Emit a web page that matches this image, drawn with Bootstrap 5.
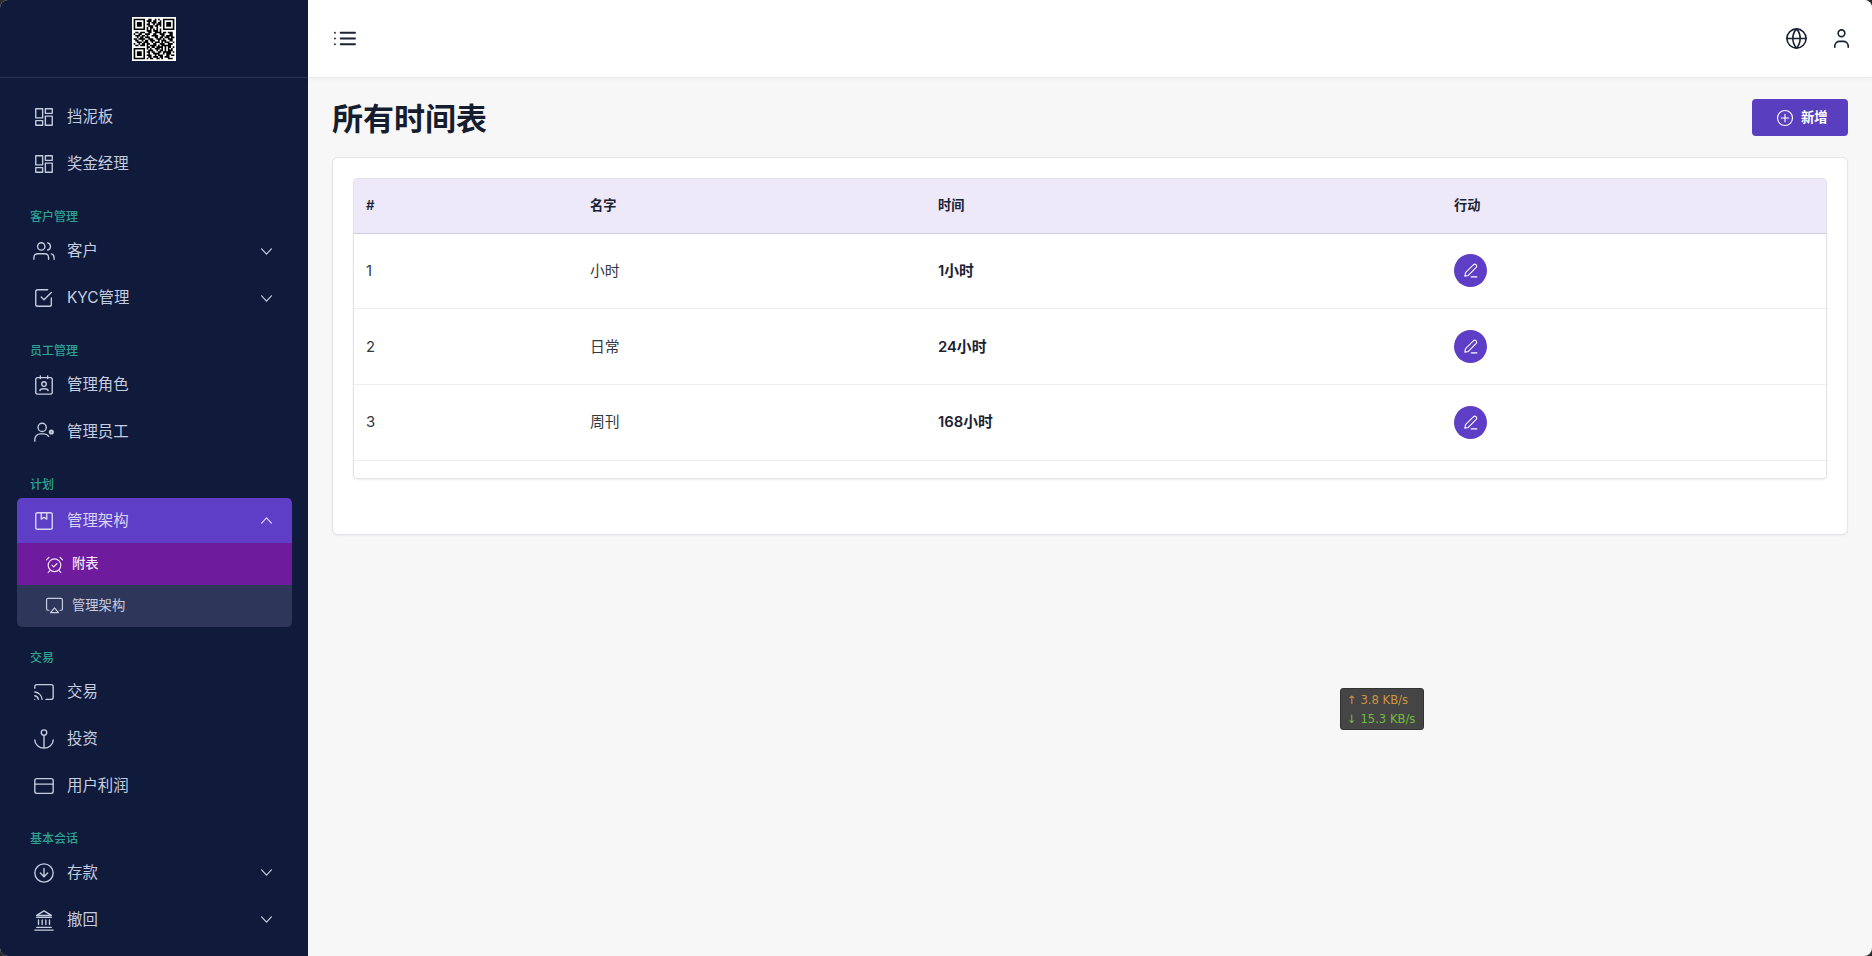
<!DOCTYPE html>
<html lang="zh"><head><meta charset="utf-8"><title>所有时间表</title>
<link href="https://cdn.jsdelivr.net/npm/bootstrap@5.3.0/dist/css/bootstrap.min.css" rel="stylesheet">
<style>
html,body{height:100%;background:#2b2b2b;overflow:hidden}
body{font-family:Inter,"Noto Sans CJK SC",sans-serif;color:#1a2233}
.shell{height:956px;border-radius:8px;overflow:hidden;background:#f7f7f8;position:relative}
.ic{fill:none;stroke:currentColor;stroke-width:1.5;stroke-linecap:round;stroke-linejoin:round;flex:none}
.side{width:308px;flex:none;background:#101a3a;color:#c6cde0;height:956px;overflow:hidden}
.brand{height:77.5px;border-bottom:1px solid #2a3350}
.qr{width:44px;height:44px;margin-top:2px;background:#fff}
.menu{padding:16px 16px 0 17px}
.entry{height:47px;padding:0 19px 0 16px;gap:12px;color:#c6cde0;font-size:15.4px;text-decoration:none}
.entry svg.m{width:22px;height:22px}
.entry svg.v{width:13px;height:13px;margin-left:auto;stroke-width:2.2}
.sect{font-size:12px;line-height:18px;padding:20.5px 0 1.5px 13px;color:#2da392;font-weight:500;height:40px}
.entry.on{height:45px;margin-top:2.5px;background:#5e3ec6;border-radius:5px 5px 0 0;color:#d9d5f2}
.sub{height:41.5px;padding-left:28px;gap:8px;font-size:13.3px;background:#2e3659;color:#c6cde0}
.sub svg{width:19px;height:19px}
.sub.cur{background:#6f1b9e;color:#f0e4f8;height:42px;font-weight:500}
.sub.end{border-radius:0 0 5px 5px;margin-bottom:1.5px}
.top{height:78px;background:#fff;border-bottom:1px solid #e9e9ec;padding:0 19px 0 25px;box-shadow:0 1px 5px rgba(20,20,50,.04)}
.top svg{width:23px;height:23px;color:#1a2233;stroke-width:1.7}
.top svg.lst{stroke-width:1.9}
.sp22{gap:22px}
.pad{padding:21px 24px 0 24px}
.ttl{font-size:31px;font-weight:700;color:#151d2f;line-height:37px;height:37px;padding-top:1px;margin:0}
.addbtn{width:96px;height:37px;background:#5a3ec0;color:#fff;font-size:13.3px;font-weight:700;border:0;border-radius:4px;gap:7px;padding:0 0 0 24px}
.addbtn svg{width:18px;height:18px}
.panel{margin-top:21px;background:#fff;border:1px solid #e3e3e8;border-radius:6px;height:378px;padding:20px;box-shadow:0 1px 2px rgba(20,20,50,.05)}
.tbox{border:1px solid #e3e3e8;border-radius:4px;height:301px;overflow:hidden;box-shadow:0 1px 2px rgba(20,20,50,.08)}
.tbl{table-layout:fixed;width:100%;margin:0}
.tbl th{background:#ede9f8;height:54px;padding:0 12px;font-size:13.2px;font-weight:600;color:#1a2233;vertical-align:middle;border-bottom:1px solid #cfcbe3}
.tbl td{height:75.8px;padding:0 12px;font-size:14.8px;color:#33373f;vertical-align:middle;border-bottom:1px solid #eeeef1}
.tbl td.hrs{font-weight:600;color:#1a2233}
.w1{width:224px}.w2{width:348px}.w3{width:516px}
.edit{width:33px;height:33px;background:#5e3ec6;color:#fff;padding:0;border:0}
.edit svg{width:17px;height:17px}
.speed{position:absolute;left:1340px;top:688px;width:84px;height:42px;background:#454545;border:1px solid #333;border-radius:3px;font-family:"DejaVu Sans",sans-serif;font-size:11.6px;line-height:19px;padding:2px 0 0 6px;white-space:nowrap}
.up{color:#cf9440}.dn{color:#6fbe3e}
</style></head><body>
<div class="shell d-flex">
<aside class="side d-flex flex-column">
<div class="brand d-flex justify-content-center align-items-center">
<svg class="qr" viewBox="-1 -1 27 27"><path fill="none" stroke="#000" stroke-width="1" d="M0 .5h7M9 .5h2M13 .5h1M15 .5h1M18 .5h7M0 1.5h1M6 1.5h1M8 1.5h3M12 1.5h2M16 1.5h1M18 1.5h1M24 1.5h1M0 2.5h1M2 2.5h3M6 2.5h1M9 2.5h1M11 2.5h3M15 2.5h2M18 2.5h1M20 2.5h3M24 2.5h1M0 3.5h1M2 3.5h3M6 3.5h1M8 3.5h2M12 3.5h1M14 3.5h3M18 3.5h1M20 3.5h3M24 3.5h1M0 4.5h1M2 4.5h3M6 4.5h1M9 4.5h3M13 4.5h2M16 4.5h1M18 4.5h1M20 4.5h3M24 4.5h1M0 5.5h1M6 5.5h1M8 5.5h1M10 5.5h2M14 5.5h1M18 5.5h1M24 5.5h1M0 6.5h7M8 6.5h1M10 6.5h1M12 6.5h1M14 6.5h1M16 6.5h1M18 6.5h7M8 7.5h3M12 7.5h3M16 7.5h1M1 8.5h2M4 8.5h3M9 8.5h2M13 8.5h4M18 8.5h2M21 8.5h3M0 9.5h1M3 9.5h2M7 9.5h3M12 9.5h2M16 9.5h3M22 9.5h2M1 10.5h3M5 10.5h2M8 10.5h1M11 10.5h4M17 10.5h2M20 10.5h4M2 11.5h1M4 11.5h2M7 11.5h3M13 11.5h2M16 11.5h2M19 11.5h3M23 11.5h2M0 12.5h2M3 12.5h4M9 12.5h3M14 12.5h3M18 12.5h1M21 12.5h3M1 13.5h2M5 13.5h1M7 13.5h2M10 13.5h3M15 13.5h1M17 13.5h3M22 13.5h2M2 14.5h3M6 14.5h3M11 14.5h1M13 14.5h3M17 14.5h1M19 14.5h3M24 14.5h1M0 15.5h1M3 15.5h1M5 15.5h2M8 15.5h2M12 15.5h2M16 15.5h3M21 15.5h3M1 16.5h2M4 16.5h3M8 16.5h1M10 16.5h4M15 16.5h1M17 16.5h6M8 17.5h2M11 17.5h2M14 17.5h3M17 17.5h1M19 17.5h1M21 17.5h2M24 17.5h1M0 18.5h7M8 18.5h1M10 18.5h1M13 18.5h3M17 18.5h1M19 18.5h1M21 18.5h1M23 18.5h1M0 19.5h1M6 19.5h1M9 19.5h3M14 19.5h1M16 19.5h2M19 19.5h1M21 19.5h3M0 20.5h1M2 20.5h3M6 20.5h1M8 20.5h2M11 20.5h2M15 20.5h2M18 20.5h5M24 20.5h1M0 21.5h1M2 21.5h3M6 21.5h1M9 21.5h1M12 21.5h4M18 21.5h1M20 21.5h3M0 22.5h1M2 22.5h3M6 22.5h1M8 22.5h3M13 22.5h1M15 22.5h3M20 22.5h2M23 22.5h2M0 23.5h1M6 23.5h1M9 23.5h2M12 23.5h3M16 23.5h2M19 23.5h3M0 24.5h7M8 24.5h1M10 24.5h2M14 24.5h2M17 24.5h1M21 24.5h3"/></svg>
</div>
<nav class="menu d-flex flex-column">
<a class="entry d-flex align-items-center"><svg class="ic m" viewBox="0 0 24 24"><rect x="3" y="3" width="7.500" height="10"/><rect x="13.500" y="3" width="7.500" height="5"/><rect x="3" y="16" width="7.500" height="5"/><rect x="13.500" y="11" width="7.500" height="10"/></svg>挡泥板</a>
<a class="entry d-flex align-items-center"><svg class="ic m" viewBox="0 0 24 24"><rect x="3" y="3" width="7.500" height="10"/><rect x="13.500" y="3" width="7.500" height="5"/><rect x="3" y="16" width="7.500" height="5"/><rect x="13.500" y="11" width="7.500" height="10"/></svg>奖金经理</a>
<div class="sect">客户管理</div>
<a class="entry d-flex align-items-center"><svg class="ic m" viewBox="0 0 24 24"><path d="M17 21v-2a4 4 0 0 0-4-4H5a4 4 0 0 0-4 4v2"/><circle cx="9" cy="7" r="4"/><path d="M23 21v-2a4 4 0 0 0-3-3.870M16 3.130a4 4 0 0 1 0 7.750"/></svg>客户<svg class="ic v" viewBox="0 0 24 24"><path d="M3 7l9 10 9-10"/></svg></a>
<a class="entry d-flex align-items-center"><svg class="ic m" viewBox="0 0 24 24"><path d="M9 11l3 3 8-8"/><path d="M20 12v7a2 2 0 0 1-2 2H5a2 2 0 0 1-2-2V5a2 2 0 0 1 2-2h11"/></svg>KYC管理<svg class="ic v" viewBox="0 0 24 24"><path d="M3 7l9 10 9-10"/></svg></a>
<div class="sect">员工管理</div>
<a class="entry d-flex align-items-center"><svg class="ic m" viewBox="0 0 24 24"><rect x="3" y="4" width="18" height="18" rx="2"/><path d="M8 2v3M16 2v3"/><circle cx="12" cy="11" r="2.500"/><path d="M7.500 18c.5-2.500 8.500-2.500 9 0"/></svg>管理角色</a>
<a class="entry d-flex align-items-center"><svg class="ic m" viewBox="0 0 24 24"><circle cx="10" cy="7" r="4.500"/><path d="M2 22v-2a6 6 0 0 1 6-6h4a6 6 0 0 1 5 2.700"/><circle cx="20" cy="12" r="1.700" stroke-width="2.200"/></svg>管理员工</a>
<div class="sect">计划</div>
<a class="entry on d-flex align-items-center"><svg class="ic m" viewBox="0 0 24 24"><rect x="3" y="3" width="18" height="18" rx="2"/><path d="M9 3v7l3-2 3 2V3"/></svg>管理架构<svg class="ic v" viewBox="0 0 24 24"><path d="M3 17l9-10 9 10"/></svg></a>
<a class="entry sub cur d-flex align-items-center"><svg class="ic" viewBox="0 0 24 24"><circle cx="12" cy="13" r="8"/><path d="M9 13l2 2 4-4M2 6l3-3M22 6l-3-3M6 20l-2 2M18 20l2 2"/></svg>附表</a>
<a class="entry sub end d-flex align-items-center"><svg class="ic" viewBox="0 0 24 24"><path d="M5 18H4a2 2 0 0 1-2-2V5a2 2 0 0 1 2-2h16a2 2 0 0 1 2 2v11a2 2 0 0 1-2 2h-1"/><path d="M12 15l5 6H7z"/></svg>管理架构</a>
<div class="sect">交易</div>
<a class="entry d-flex align-items-center"><svg class="ic m" viewBox="0 0 24 24"><path d="M2 16.100A5 5 0 0 1 5.900 20M2 12.050A9 9 0 0 1 9.950 20M2 8V6a2 2 0 0 1 2-2h16a2 2 0 0 1 2 2v12a2 2 0 0 1-2 2h-6M2 20h.01"/></svg>交易</a>
<a class="entry d-flex align-items-center"><svg class="ic m" viewBox="0 0 24 24"><circle cx="12" cy="5" r="3"/><path d="M12 22V8M2 13a10 9 0 0 0 20 0"/></svg>投资</a>
<a class="entry d-flex align-items-center"><svg class="ic m" viewBox="0 0 24 24"><rect x="2" y="4" width="20" height="16" rx="2"/><path d="M2 10h20"/></svg>用户利润</a>
<div class="sect">基本会话</div>
<a class="entry d-flex align-items-center"><svg class="ic m" viewBox="0 0 24 24"><circle cx="12" cy="12" r="10"/><path d="M8 12l4 4 4-4M12 7v9"/></svg>存款<svg class="ic v" viewBox="0 0 24 24"><path d="M3 7l9 10 9-10"/></svg></a>
<a class="entry d-flex align-items-center"><svg class="ic m" viewBox="0 0 24 24"><path d="M2 23h20M4 20h16M4 9h16M12 2l8 5H4zM6 12v5M10 12v5M14 12v5M18 12v5"/></svg>撤回<svg class="ic v" viewBox="0 0 24 24"><path d="M3 7l9 10 9-10"/></svg></a>
</nav>
</aside>
<div class="flex-grow-1 d-flex flex-column">
<header class="top d-flex align-items-center justify-content-between">
<svg class="ic lst" viewBox="0 0 24 24"><path d="M8 6h15M8 12h15M8 18h15M2 6h.01M2 12h.01M2 18h.01"/></svg>
<div class="d-flex align-items-center sp22"><svg class="ic" viewBox="0 0 24 24"><circle cx="12" cy="12" r="10"/><path d="M2 12h20M12 2a15 15 0 0 1 0 20 15 15 0 0 1 0-20z"/></svg><svg class="ic" viewBox="0 0 24 24"><circle cx="12" cy="6.500" r="3.500"/><path d="M5 21v-1.500a5 5 0 0 1 5-4.500h4a5 5 0 0 1 5 4.500V21"/></svg></div>
</header>
<main class="pad">
<div class="d-flex align-items-center justify-content-between"><h1 class="ttl">所有时间表</h1>
<button class="addbtn btn d-flex align-items-center"><svg class="ic" viewBox="0 0 24 24"><circle cx="12" cy="12" r="10"/><path d="M12 7v10M7 12h10"/></svg>新增</button></div>
<div class="panel"><div class="tbox">
<table class="tbl"><thead><tr><th class="w1">#</th><th class="w2">名字</th><th class="w3">时间</th><th>行动</th></tr></thead><tbody>
<tr><td>1</td><td>小时</td><td class="hrs">1小时</td><td><button class="edit btn rounded-circle d-flex align-items-center justify-content-center"><svg class="ic" viewBox="0 0 24 24"><path d="M4 20l1-5L16 4a2.500 2.500 0 0 1 4 3.500L9 19zM13 21h8"/></svg></button></td></tr>
<tr><td>2</td><td>日常</td><td class="hrs">24小时</td><td><button class="edit btn rounded-circle d-flex align-items-center justify-content-center"><svg class="ic" viewBox="0 0 24 24"><path d="M4 20l1-5L16 4a2.500 2.500 0 0 1 4 3.500L9 19zM13 21h8"/></svg></button></td></tr>
<tr><td>3</td><td>周刊</td><td class="hrs">168小时</td><td><button class="edit btn rounded-circle d-flex align-items-center justify-content-center"><svg class="ic" viewBox="0 0 24 24"><path d="M4 20l1-5L16 4a2.500 2.500 0 0 1 4 3.500L9 19zM13 21h8"/></svg></button></td></tr>
</tbody></table></div></div>
</main>
</div>
<div class="speed"><div class="up">↑ 3.8 KB/s</div><div class="dn">↓ 15.3 KB/s</div></div>
</div>
<script src="https://cdn.jsdelivr.net/npm/bootstrap@5.3.0/dist/js/bootstrap.bundle.min.js"></script>
</body></html>
